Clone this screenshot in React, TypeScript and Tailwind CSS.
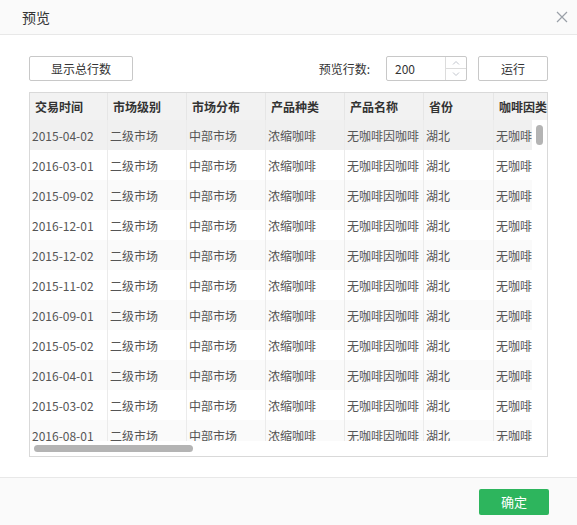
import React from 'react';

// --- DATA ---
const columns = [
  { title: '交易时间', w: 'w-[78px]' },
  { title: '市场级别', w: 'w-[79px]' },
  { title: '市场分布', w: 'w-[79px]' },
  { title: '产品种类', w: 'w-[79px]' },
  { title: '产品名称', w: 'w-[79px]' },
  { title: '省份', w: 'w-[70px]' },
  { title: '咖啡因类', w: 'w-[80px]' },
];

const dates = [
  '2015-04-02', '2016-03-01', '2015-09-02', '2016-12-01', '2015-12-02', '2015-11-02',
  '2016-09-01', '2015-05-02', '2016-04-01', '2015-03-02', '2016-08-01', '2016-02-01',
];

const rows = dates.map((d) => [d, '二级市场', '中部市场', '浓缩咖啡', '无咖啡因咖啡', '湖北', '无咖啡因']);

// --- ICONS ---
const CloseIcon = () => (
  <svg width="12" height="12" viewBox="0 0 12 12" stroke="#9aa0a8" strokeWidth="1.2" fill="none">
    <path d="M1 1 L11 11 M11 1 L1 11" />
  </svg>
);

const Chevron = ({ up }: { up?: boolean }) => (
  <svg width="8" height="5" viewBox="0 0 8 5" stroke="#c0c4cc" strokeWidth="1" fill="none">
    <path d={up ? 'M1 4.5 L4 1.5 L7 4.5' : 'M1 0.5 L4 3.5 L7 0.5'} />
  </svg>
);

// --- MAIN ---
export default function App() {
  return (
    <div
      className="w-[577px] h-[525px] flex flex-col bg-white text-[#333] overflow-hidden"
      style={{ fontFamily: '"Noto Sans CJK SC", "Open Sans", sans-serif' }}
    >
      {/* header */}
      <div className="h-[35px] shrink-0 flex items-center justify-between pl-[22px] pr-[9px] bg-[#fafafa] border-b border-[#e8e8e8]">
        <span className="text-[14px] text-[#333]">预览</span>
        <CloseIcon />
      </div>

      {/* body */}
      <div className="flex-1 px-[29px] pt-[21px]">
        <div className="h-[25px] flex items-center">
          <button className="w-[104px] h-[25px] border border-[#c8c8c8] rounded-[2px] text-[12px] text-[#333] bg-white">
            显示总行数
          </button>
          <span className="ml-auto text-[12px] text-[#333]">预览行数:</span>
          <div className="ml-[16px] w-[81px] h-[25px] flex border border-[#c8c8c8] rounded-[2px]">
            <div className="flex-1 flex items-center pl-[8px] text-[12px] text-[#333]">200</div>
            <div className="w-[21px] flex flex-col border-l border-[#dcdcdc]">
              <div className="flex-1 flex items-center justify-center border-b border-[#dcdcdc]">
                <Chevron up />
              </div>
              <div className="flex-1 flex items-center justify-center">
                <Chevron />
              </div>
            </div>
          </div>
          <button className="ml-[11px] w-[70px] h-[25px] border border-[#c8c8c8] rounded-[2px] text-[12px] text-[#333] bg-white">
            运行
          </button>
        </div>

        {/* table */}
        <div className="mt-[11px] h-[365px] border border-[#d9d9d9] flex flex-col overflow-hidden">
          <div className="h-[27px] shrink-0 flex bg-[#f2f2f2] overflow-hidden">
            {columns.map((c) => (
              <div
                key={c.title}
                className={`${c.w} shrink-0 h-full flex items-center pl-[5px] pt-[1px] border-r border-[#e6e6e6] text-[12px] font-bold text-[#333] whitespace-nowrap`}
              >
                {c.title}
              </div>
            ))}
          </div>

          <div className="flex h-[321px] shrink-0">
            <div className="w-[503px] overflow-hidden">
              {rows.map((r, i) => (
                <div
                  key={i}
                  className={`h-[30px] flex ${i === 0 ? 'bg-[#f0f0f0]' : i % 2 === 0 ? 'bg-[#fafafa]' : 'bg-white'}`}
                >
                  {r.map((v, j) => (
                    <div
                      key={j}
                      className={`${columns[j].w} shrink-0 h-full flex items-center pl-[2px] pt-[2px] border-r border-[#ebebeb] text-[12px] text-[#555] whitespace-nowrap overflow-hidden`}
                    >
                      {v}
                    </div>
                  ))}
                </div>
              ))}
            </div>
            <div className="w-[15px] shrink-0 bg-white pt-[5px] pl-[4px]">
              <div className="w-[7px] h-[20px] rounded-full bg-[#b4b4b4]" />
            </div>
          </div>

          <div className="flex-1 bg-white pt-[4px] pl-[4px]">
            <div className="w-[159px] h-[7px] rounded-full bg-[#b4b4b4]" />
          </div>
        </div>
      </div>

      {/* footer */}
      <div className="h-[48px] shrink-0 flex items-center justify-end pr-[28px] bg-[#fafafa] border-t border-[#e8e8e8]">
        <button className="w-[70px] h-[26px] rounded-[2px] bg-[#2db55d] text-white text-[13px]">确定</button>
      </div>
    </div>
  );
}
